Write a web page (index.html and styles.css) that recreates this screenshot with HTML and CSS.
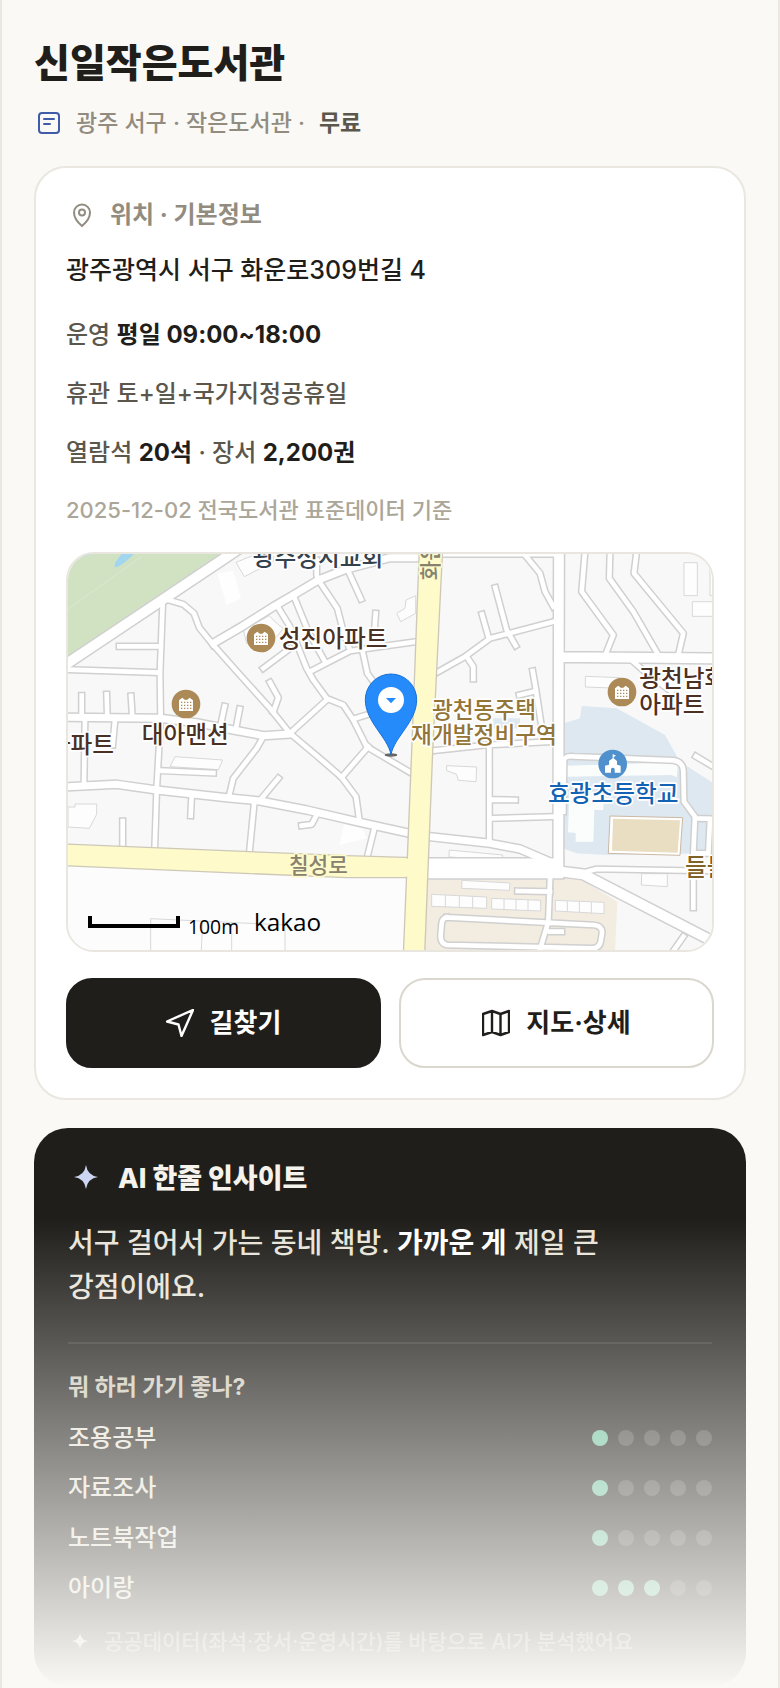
FILE: index.html
```html
<!DOCTYPE html>
<html lang="ko">

<head>
    <meta charset="UTF-8">
    <meta name="viewport" content="width=device-width, initial-scale=1.0">
    <title>신일작은도서관</title>
    <link rel="stylesheet" href="styles.css">
</head>

<body>
    <main class="page">
        <header class="header">
            <h1>신일작은도서관</h1>
            <p class="meta">
                <svg class="icon-type" viewBox="0 0 28 28" aria-hidden="true">
                    <rect x="5" y="4" width="20" height="20" rx="3" />
                    <path d="M10 10h10M10 15h6" />
                </svg>
                <span>광주 서구 · 작은도서관 ·</span>
                <b>무료</b>
            </p>
        </header>

        <section class="card">
            <h2 class="card-title">
                <svg class="icon-pin" viewBox="0 0 32 32" aria-hidden="true">
                    <path d="M16 27C13 24.500 8 19.500 8 13.500a8 8 0 0 1 16 0C24 19.500 19 24.500 16 27z" />
                    <circle cx="16" cy="13.500" r="3" />
                </svg>
                위치 · 기본정보
            </h2>
            <p class="address">광주광역시 서구 화운로309번길 4</p>
            <div class="facts">
                <p>운영 <b>평일 09:00~18:00</b></p>
                <p>휴관 토+일+국가지정공휴일</p>
                <p>열람석 <b>20석</b> · 장서 <b>2,200권</b></p>
                <p class="source">2025-12-02 전국도서관 표준데이터 기준</p>
            </div>

            <div class="map">
                <svg viewBox="24 27 1932 1188" preserveAspectRatio="xMidYMid slice" role="img" aria-label="신일작은도서관 위치 지도">
                    <defs>
                        <g id="lanes">
                            <path d="M24 374L300 383M298 304H178M308 175L300 385L302 520L290 735L284 915" />
                            <path d="M325 165L370 178L402 205L418 248L460 300L540 390L630 490L690 565L770 632L845 697L888 755L898 825" />
                            <path d="M770 45V90L775 105L832 190L850 260L870 315M862 72L903 162M650 180L690 245L740 370L760 405L800 460L850 480L880 525L920 605L1055 685M925 605L845 697" />
                            <path d="M700 150L745 260L795 350M750 380L870 318L1010 298L1070 290M947 205L943 260M610 370L690 310M630 412L655 458L640 500M690 565L800 465M880 522L935 505M908 320L922 385L940 410" />
                            <path d="M65 452V515M140 448L142 515M213 453L217 515M494 484L482 540M539 492L528 550M75 520L72 715M165 525L158 600M610 575L590 610L520 700L508 750M300 677L460 684" />
                            <path d="M395 752L392 812M188 828V905M583 770L568 925M605 760L655 700M770 810L755 838L725 842M943 850L922 935" />
                            <path d="M1395 30L1440 85L1455 140L1480 185M1575 20L1565 140L1660 270L1640 320M1650 20L1648 100L1720 200L1795 330M1730 20L1722 85L1870 265L1855 330" />
                            <path d="M1135 380L1215 335L1290 280L1360 262L1480 230M1306 128L1340 255L1367 302M1266 208L1285 275M1220 335L1240 365V402M1418 378L1428 435L1447 560M1378 450L1428 438M1720 350L1760 385L1835 440" />
                            <path d="M1120 617L1280 600L1475 590M1288 600V890M1300 764L1366 765M1295 820L1480 815M1580 980L1610 972L1960 978M1908 634L1960 665M1900 1000V1088M1870 1175L1835 1225" />
                            <path d="M1510 800L1512 645Q1515 632 1540 634L1840 646Q1870 650 1870 680L1872 770L1905 815L1900 925M1905 820L1960 822M1950 825L1945 925M1900 925H1945" />
                            <path d="M1470 1005L1465 1130L1438 1220M1373 1038L1470 1040M1160 1117L1600 1140Q1628 1142 1626 1165L1622 1190Q1618 1210 1595 1210L1160 1200Q1140 1195 1142 1170L1145 1135Q1147 1120 1160 1117M1470 1160H1505" />
                        </g>
                        <g id="streets">
                            <path d="M24 725L170 718L290 735L500 758L600 768L740 795L900 832L1050 865M24 517L300 520L420 535L520 555L610 572L690 567" />
                            <path d="M460 295L545 245L640 185L700 150L775 105L860 72L990 38H1085M1140 24H1485M1110 875L1290 895L1380 912L1480 955" />
                        </g>
                        <g id="avenues">
                            <path d="M10 363L320 156L505 32L560 -5M1497 10L1495 960M1500 336L1970 340M1490 978L1570 988L1970 1195" />
                        </g>
                        <g id="building-mark">
                            <circle r="43" fill="#ab8a57" />
                            <path d="M-21 21V-11L-11 -19L-2 -11V-13H2V-11L11 -19L21 -11V21z" fill="#fff" />
                            <path d="M-15 -5H16M-15 4H16M-15 13H16" stroke="#ab8a57" stroke-width="4" stroke-dasharray="4 5" />
                        </g>
                    </defs>

                    <!-- land, park, school grounds -->
                    <rect x="24" y="27" width="1932" height="1188" fill="#f8f8f8" />
                    <path d="M24 960L1045 998V1215H24z" fill="#fcfcfc" />
                    <path d="M24 27H485L24 338z" fill="#d1e2c3" />
                    <path d="M185 27Q160 55 164 66Q175 72 222 27zM45 48Q70 32 100 27H70z" fill="#a2d5ef" />
                    <path d="M24 192L245 35" stroke="#dbe8cf" stroke-width="3" />
                    <path d="M1565 483L1670 490L1815 570L1860 650L1956 712V925L1640 930L1550 925L1495 905V540L1560 520z" fill="#dde8f0" />
                    <path d="M1300 520H1380V550H1300z" fill="#dde8f0" />
                    <path d="M1100 1000H1480L1500 990L1555 998L1672 1070L1665 1215H1090z" fill="#f2ece1" />

                    <g class="plots">
                        <path d="M528 52L590 27H640V50L553 95zM550 255L628 212L650 235L670 250L650 275L560 295zM1010 205L1035 190L1038 165L1067 152V205L1022 230z" />
                        <path d="M24 786H45V777H110V808L88 850L24 846zM345 635L488 645L475 674L330 665zM1160 662L1250 666L1248 710L1195 706L1190 688L1160 677z" />
                        <path d="M1872 53H1912V152H1872zM1950 53H1970V152H1950zM1897 170H1960V214H1897zM1576 394L1680 398V430L1576 426zM1168 915L1328 930L1326 945L1167 936zM1206 1006L1350 1014L1348 1036L1205 1030z" />
                        <path d="M1115 1048L1280 1056V1090L1115 1084zM1156 1050V1087M1198 1052V1088M1238 1054V1090M1295 1060L1442 1066V1098L1295 1092zM1332 1062V1094M1368 1063V1096M1404 1064V1097M1486 1066L1632 1072V1106L1486 1098zM1522 1068V1100M1558 1070V1103M1594 1071V1105" />
                        <path d="M1745 986H1822V1025L1744 1020zM272 1215V1121L675 1140V1215M428 1128L424 1215M515 1134V1215" />
                    </g>
                    <path d="M472 85L520 78L543 160L500 180zM853 838L905 850L920 880L838 900z" fill="#fefefe" />
                    <path d="M1518 662L1855 652L1850 697L1835 690L1518 695zM1528 740H1630V795H1603L1600 890H1547V864L1524 862z" fill="#fbfdfc" />
                    <path d="M1650 813L1868 818L1860 931L1645 925z" fill="#fff" stroke="#cdb8a4" stroke-width="3" />
                    <path d="M1659 821L1860 826L1853 923L1656 917z" fill="#e9dec1" />

                    <g class="road-edge">
                        <use href="#lanes" stroke-width="23" />
                        <use href="#streets" stroke-width="30" />
                        <use href="#avenues" stroke-width="38" />
                        <path d="M1100 970H1480" stroke-width="68" />
                    </g>
                    <g class="road-fill">
                        <use href="#lanes" stroke-width="14" />
                        <use href="#streets" stroke-width="21" />
                        <use href="#avenues" stroke-width="29" />
                        <path d="M1100 970H1480" stroke-width="59" />
                    </g>
                    <g fill="#fefac9" stroke="#cdc8b8" stroke-width="4">
                        <path d="M10 897L860 932L1060 938V998L860 998L10 962z" />
                        <path d="M1078 10H1148L1118 620L1094 1230H1030L1055 620z" />
                        <path d="M1030 941H1070V995H1030z" stroke="none" />
                    </g>

                    <g class="labels">
                        <text x="578" y="62" fill="#33424d">광주성시교회</text>
                        <text x="656" y="305" fill="#4b3024">성진아파트</text>
                        <text x="376" y="593" text-anchor="middle" fill="#4b3024">대아맨션</text>
                        <text x="162" y="624" text-anchor="end" fill="#4b3024">아파트</text>
                        <text x="1738" y="425" fill="#4b3024">광천남화</text>
                        <text x="1738" y="504" fill="#4b3024">아파트</text>
                        <text x="1272" y="518" text-anchor="middle" class="district">광천동주택</text>
                        <text x="1272" y="594" text-anchor="middle" class="district">재개발정비구역</text>
                        <text x="1660" y="772" text-anchor="middle" fill="#1263b3">효광초등학교</text>
                        <text x="1875" y="994" fill="#7f6228">들불</text>
                        <text x="775" y="984" text-anchor="middle" class="street">칠성로</text>
                        <text transform="translate(1134 106) rotate(-90)" class="street">화운로</text>
                    </g>

                    <use href="#building-mark" x="603" y="279" />
                    <use href="#building-mark" x="378" y="477" />
                    <use href="#building-mark" x="1686" y="441" />
                    <g transform="translate(1658 657)">
                        <circle r="43" fill="#5090cc" />
                        <path d="M-23 26V5L-11 2V-9L0 -17V-30L10 -25L3 -21V-17L13 -9V2L24 5V26H6V14Q1 8 -5 14V26z" fill="#fff" />
                    </g>

                    <!-- current place -->
                    <ellipse cx="993" cy="630" rx="19" ry="5" fill="#666" />
                    <path d="M993 628C982 575 916 530 916 464a77 77 0 0 1 154 0C1070 530 1004 575 993 628z" fill="#258bfa" stroke="#1670d8" stroke-width="3" />
                    <circle cx="993" cy="465" r="39" fill="#fff" />
                    <path d="M978 459H1008L993 475z" fill="#258bfa" />

                    <path d="M90 1113V1143H354V1113" fill="none" stroke="#000" stroke-width="12" />
                    <text x="384" y="1166" class="scale">100m</text>
                    <text x="582" y="1159" class="brand">kakao</text>
                </svg>
            </div>

            <div class="actions">
                <button type="button" class="btn btn-dark">
                    <svg viewBox="0 0 28 28" aria-hidden="true">
                        <path d="M27 1L1 12.500L12.500 15.500L15.500 27z" />
                    </svg>
                    길찾기
                </button>
                <button type="button" class="btn">
                    <svg viewBox="0 0 28 28" aria-hidden="true">
                        <path d="M1 5L10 2L18.500 5L27 2V23L18.500 26L10 23L1 26zM10 2V23M18.500 5V26" />
                    </svg>
                    지도·상세
                </button>
            </div>
        </section>

        <section class="insight">
            <h2 class="insight-title">
                <svg viewBox="0 0 36 36" aria-hidden="true">
                    <path d="M18 4Q19.500 14.500 30 16Q19.500 17.500 18 28Q16.500 17.500 6 16Q16.500 14.500 18 4z" />
                </svg>
                AI 한줄 인사이트
            </h2>
            <p class="insight-text">서구 걸어서 가는 동네 책방. <b>가까운 게</b> 제일 큰<br>강점이에요.</p>
            <h3>뭐 하러 가기 좋나?</h3>
            <ul class="ratings">
                <li>조용공부
                    <span class="dots" role="img" aria-label="5점 중 1점"><i class="on"></i><i></i><i></i><i></i><i></i></span>
                </li>
                <li>자료조사
                    <span class="dots" role="img" aria-label="5점 중 1점"><i class="on"></i><i></i><i></i><i></i><i></i></span>
                </li>
                <li>노트북작업
                    <span class="dots" role="img" aria-label="5점 중 1점"><i class="on"></i><i></i><i></i><i></i><i></i></span>
                </li>
                <li>아이랑
                    <span class="dots" role="img" aria-label="5점 중 3점"><i class="on"></i><i class="on"></i><i class="on"></i><i></i><i></i></span>
                </li>
            </ul>
            <p class="note">
                <svg viewBox="0 0 24 24" aria-hidden="true">
                    <path d="M12 3Q13 10 20 11Q13 12 12 19Q11 12 4 11Q11 10 12 3z" />
                </svg>
                공공데이터(좌석·장서·운영시간)를 바탕으로 AI가 분석했어요
            </p>
        </section>
        <div class="fade"></div>
    </main>
</body>

</html>
```

FILE: styles.css
```css
* {
    box-sizing: border-box;
    margin: 0;
    padding: 0;
}

body {
    background-color: #faf9f5;
    color: #1f1e1a;
    font-family: Inter, "Noto Sans CJK KR", sans-serif;
    font-size: 24px;
    font-weight: 500;
}

.page {
    position: relative;
    min-height: 100vh;
    padding: 36px 32px 0;
    border-left: 2px solid #e9e7df;
    border-right: 2px solid #e9e7df;
    overflow: hidden;
}

svg {
    flex: none;
}

h1 {
    font-size: 39px;
    line-height: 54px;
    font-weight: 800;
}

.meta {
    display: flex;
    align-items: center;
    margin: 16px 0 26px;
    font-size: 23px;
    line-height: 34px;
    color: #918c7f;
}

.meta b {
    margin-left: 14px;
    font-weight: 600;
    color: #5b574c;
}

.icon-type {
    width: 28px;
    height: 28px;
    margin-right: 14px;
    fill: none;
    stroke: #3f5ba9;
    stroke-width: 2;
    stroke-linecap: round;
}

.card {
    padding: 30px;
    background-color: #fff;
    border: 2px solid #e9e7e0;
    border-radius: 32px;
}

.card-title {
    display: flex;
    align-items: center;
    gap: 12px;
    font-size: 24px;
    line-height: 34px;
    font-weight: 700;
    color: #918c7f;
}

.icon-pin {
    width: 32px;
    height: 32px;
    fill: none;
    stroke: #918c7f;
    stroke-width: 2;
}

.address {
    margin-top: 18px;
    font-size: 25px;
    line-height: 40px;
}

.facts {
    display: grid;
    gap: 21px;
    margin-top: 26px;
    line-height: 38px;
    color: #5b574c;
}

.facts b {
    font-weight: 700;
    color: #1f1e1a;
}

.facts .source {
    font-size: 22px;
    line-height: 34px;
    color: #aba698;
}

.map {
    margin: 25px 0 26px;
    border: 2px solid #e9e6e0;
    border-radius: 28px;
    overflow: hidden;
}

.map svg {
    display: block;
    width: 100%;
}

.plots {
    fill: #fdfdfd;
    stroke: #d8d8d8;
    stroke-width: 3;
}

.road-edge,
.road-fill {
    fill: none;
    stroke: #d0d0d0;
    stroke-linecap: square;
    stroke-linejoin: round;
}

.road-fill {
    stroke: #fff;
}

.labels {
    font-family: "Noto Sans CJK KR", sans-serif;
    font-size: 71px;
    font-weight: 500;
    stroke: #fff;
    stroke-width: 10;
    stroke-linejoin: round;
    paint-order: stroke;
}

.district {
    font-size: 68px;
    fill: #937537;
}

.street {
    font-size: 64px;
    fill: #86826f;
    stroke: #fefac9;
}

.scale {
    font-family: "Open Sans", sans-serif;
    font-size: 58px;
    font-weight: 400;
}

.brand {
    font-family: "Open Sans", sans-serif;
    font-size: 73px;
    font-weight: 500;
}

.actions {
    display: grid;
    grid-template-columns: 1fr 1fr;
    gap: 18px;
}

.btn {
    display: flex;
    align-items: center;
    justify-content: center;
    gap: 16px;
    height: 90px;
    background-color: #fff;
    border: 2px solid #dad7ce;
    border-radius: 26px;
    color: #1f1e1a;
    font-family: inherit;
    font-size: 26px;
    font-weight: 700;
    line-height: 34px;
    cursor: pointer;
}

.btn-dark {
    background-color: #1f1e1a;
    border-color: #1f1e1a;
    color: #fff;
}

.btn svg {
    width: 28px;
    height: 28px;
    fill: none;
    stroke: currentColor;
    stroke-width: 2.4;
    stroke-linejoin: round;
}

.insight {
    margin-top: 28px;
    padding: 32px 34px 30px;
    background-color: #1f1e1a;
    border-radius: 34px;
    color: #f5f3ec;
}

.insight-title {
    display: flex;
    align-items: center;
    gap: 14px;
    font-size: 27px;
    line-height: 38px;
    font-weight: 800;
}

.insight-title svg {
    width: 36px;
    height: 36px;
    fill: #ccd6f2;
}

.insight-text {
    margin-top: 23px;
    padding-bottom: 33px;
    border-bottom: 2px solid #33322e;
    font-size: 28px;
    line-height: 44px;
    color: #e8e4da;
}

.insight-text b {
    font-weight: 700;
    color: #fff;
}

h3 {
    margin-top: 28px;
    font-size: 23px;
    line-height: 30px;
    font-weight: 700;
    color: #cfcabd;
}

.ratings {
    margin-top: 11px;
    list-style: none;
    line-height: 34px;
    color: #e8e4da;
}

.ratings li {
    display: flex;
    align-items: center;
    justify-content: space-between;
    height: 50px;
}

.dots {
    display: flex;
    gap: 10px;
}

.dots i {
    width: 16px;
    height: 16px;
    border-radius: 50%;
    background-color: #45443f;
}

.dots .on {
    background-color: #6fc3a0;
}

.note {
    display: flex;
    align-items: center;
    gap: 12px;
    margin-top: 15px;
    font-size: 21px;
    line-height: 28px;
    color: #918c7f;
}

.note svg {
    width: 24px;
    height: 24px;
    fill: #ccd6f2;
}

.fade {
    position: absolute;
    left: -2px;
    right: -2px;
    bottom: 0;
    height: 470px;
    background: linear-gradient(rgba(250, 249, 245, 0), #faf9f5);
    pointer-events: none;
}
```
